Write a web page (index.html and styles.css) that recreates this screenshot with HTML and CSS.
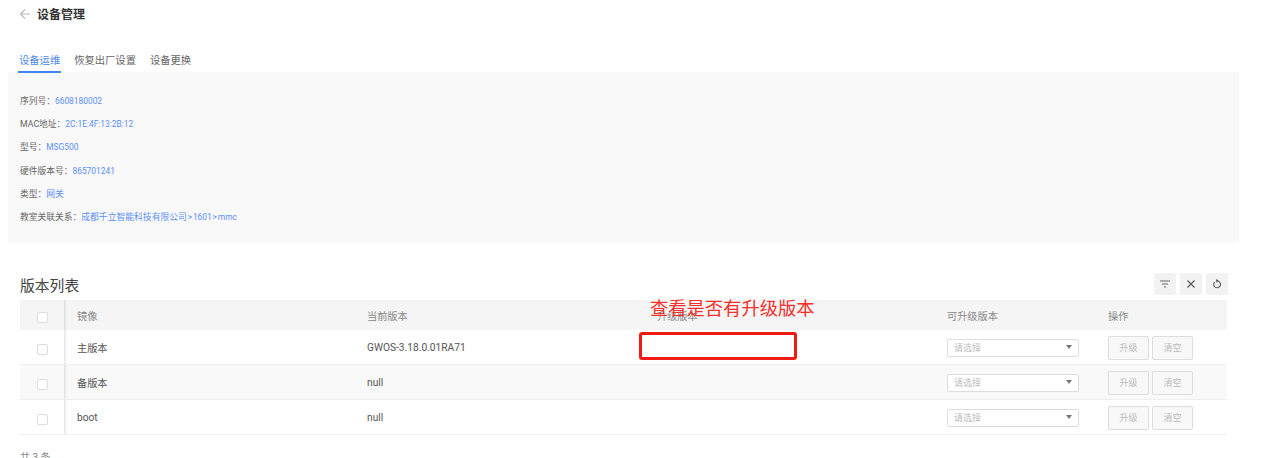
FILE: index.html
```html
<!DOCTYPE html>
<html lang="en">
<head>
    <meta charset="UTF-8">
    <meta name="viewport" content="width=device-width, initial-scale=1.0">
    <title>设备管理</title>
    <link rel="stylesheet" href="styles.css">
</head>
<body>
    <div class="page">
        <div class="title-bar">
            <svg class="back" width="12" height="12" viewBox="0 0 12 12"><path d="M11 6H1.5M6 1.5 1.5 6 6 10.5" fill="none" stroke="#bbb" stroke-width="1.1"/></svg>
            <span class="title">设备管理</span>
        </div>

        <div class="tabs">
            <a class="tab active">设备运维</a>
            <a class="tab">恢复出厂设置</a>
            <a class="tab">设备更换</a>
        </div>

        <div class="info">
            <div class="info-row">序列号：<span class="val">6608180002</span></div>
            <div class="info-row">MAC地址：<span class="val">2C:1E:4F:13:2B:12</span></div>
            <div class="info-row">型号：<span class="val">MSG500</span></div>
            <div class="info-row">硬件版本号：<span class="val">865701241</span></div>
            <div class="info-row">类型：<span class="val zh">网关</span></div>
            <div class="info-row">教室关联关系：<span class="val zh">成都千立智能科技有限公司</span><span class="val">&#8202;&gt;&#8202;1601&#8202;&gt;&#8202;mmc</span></div>
        </div>

        <div class="list-head">
            <h2>版本列表</h2>
            <div class="tools">
                <button class="tool"><svg width="12" height="12" viewBox="0 0 12 12"><path d="M1 3h10M3 6h6M5 9h2" fill="none" stroke="#666" stroke-width="1.2"/></svg></button>
                <button class="tool"><svg width="12" height="12" viewBox="0 0 12 12"><path d="M2.5 2.5l7 7M9.5 2.5l-7 7" fill="none" stroke="#555" stroke-width="1.1"/></svg></button>
                <button class="tool"><svg width="12" height="12" viewBox="0 0 12 12"><path d="M6.4 3A3.4 3.4 0 1 1 3.5 4.2" fill="none" stroke="#555" stroke-width="1.1"/><path d="M5.2 .9v3.6L7.9 2.7z" fill="#555"/></svg></button>
            </div>
        </div>

        <table class="versions">
            <colgroup>
                <col class="c-check"><col class="c-image"><col class="c-current"><col class="c-upgrade"><col class="c-avail"><col>
            </colgroup>
            <thead>
                <tr>
                    <th class="check"><span class="box"></span></th>
                    <th>镜像</th><th>当前版本</th><th>升级版本</th><th>可升级版本</th><th>操作</th>
                </tr>
            </thead>
            <tbody>
                <tr>
                    <td class="check"><span class="box"></span></td>
                    <td>主版本</td><td>GWOS-3.18.0.01RA71</td><td></td>
                    <td><div class="select">请选择<i class="caret"></i></div></td>
                    <td><div class="ops"><button class="btn">升级</button><button class="btn">清空</button></div></td>
                </tr>
                <tr class="alt">
                    <td class="check"><span class="box"></span></td>
                    <td>备版本</td><td>null</td><td></td>
                    <td><div class="select">请选择<i class="caret"></i></div></td>
                    <td><div class="ops"><button class="btn">升级</button><button class="btn">清空</button></div></td>
                </tr>
                <tr>
                    <td class="check"><span class="box"></span></td>
                    <td>boot</td><td>null</td><td></td>
                    <td><div class="select">请选择<i class="caret"></i></div></td>
                    <td><div class="ops"><button class="btn">升级</button><button class="btn">清空</button></div></td>
                </tr>
            </tbody>
        </table>

        <div class="total">共 3 条</div>

        <!-- annotation drawn over the screenshot -->
        <div class="note">查看是否有升级版本</div>
        <div class="note-box"></div>
    </div>
</body>
</html>
```

FILE: styles.css
```css
*, *:before, *:after {
    box-sizing: border-box;
}

html, body {
    margin: 0;
    height: 100%;
    overflow: hidden;
    background: #fff;
}

body {
    font-family: Roboto, "Noto Sans CJK SC", sans-serif;
    color: #555;
}

.page {
    position: relative;
    width: 1261px;
    height: 458px;
    overflow: hidden;
}

.title-bar {
    display: flex;
    align-items: center;
    gap: 6px;
    height: 27px;
    padding-left: 19px;
}

.title {
    font-size: 12px;
    font-weight: 700;
    color: #333;
}

.tabs {
    display: flex;
    gap: 14px;
    height: 45px;
    padding: 25px 0 0 19px;
}

.tab {
    position: relative;
    font-size: 10.3px;
    line-height: 18px;
    color: #666;
}

.tab.active {
    color: #4d8af0;
}

.tab.active:after {
    content: '';
    position: absolute;
    left: -1px;
    right: -1px;
    top: 19px;
    height: 2px;
    background: #3f86f5;
}

.info {
    width: 1231px;
    height: 171px;
    margin-left: 8px;
    padding: 17.5px 12px 0;
    background: #f9f9f9;
}

.info-row {
    height: 23.4px;
    font-size: 8.75px;
    line-height: 23px;
    color: #666;
}

.val {
    font-size: 8.4px;
    color: #5b8ff9;
}

.val.zh {
    font-size: 8.8px;
}

.list-head {
    display: flex;
    align-items: center;
    justify-content: space-between;
    width: 1208px;
    height: 24px;
    margin: 29px 0 0 20px;
}

.list-head h2 {
    margin: 0;
    font-size: 14.8px;
    font-weight: 400;
    color: #444;
}

.tools {
    display: flex;
    gap: 4px;
}

.tool {
    display: flex;
    align-items: center;
    justify-content: center;
    width: 22px;
    height: 22px;
    padding: 0;
    border: 0;
    border-radius: 3px;
    background: #f2f2f2;
}

.versions {
    width: 1207px;
    margin: 4px 0 0 20px;
    border-collapse: separate;
    border-spacing: 0;
    table-layout: fixed;
    font-size: 10.2px;
}

.c-check { width: 44px; }
.c-image { width: 290px; }
.c-current { width: 290px; }
.c-upgrade { width: 303px; }
.c-avail { width: 161px; }

.versions th {
    height: 30px;
    padding: 0 0 0 13px;
    background: #f5f5f5;
    font-weight: 400;
    text-align: left;
    color: #888;
}

.versions td {
    height: 35px;
    padding: 1px 0 0 13px;
    border-bottom: 1px solid #efefef;
    color: #555;
}

.versions .alt td {
    background: #f9f9f9;
}

.versions .check {
    padding: 0;
    text-align: center;
}

/* soft shadow of the fixed checkbox column */
.versions th:nth-child(2), .versions td:nth-child(2) {
    background-image: linear-gradient(90deg, rgba(0, 0, 0, .1), rgba(0, 0, 0, 0) 3px);
}

.versions th:nth-child(5), .versions td:nth-child(5),
.versions th:nth-child(6), .versions td:nth-child(6) {
    padding-left: 0;
}

.box {
    display: block;
    width: 11px;
    height: 11px;
    margin: 4px auto 0;
    border: 1px solid #ddd;
    border-radius: 2px;
    background: #fff;
}

.select {
    position: relative;
    width: 132px;
    height: 18px;
    padding-left: 6px;
    border: 1px solid #ddd;
    border-radius: 2px;
    background: #fff;
    font-size: 9px;
    line-height: 16px;
    color: #bbb;
}

.caret {
    position: absolute;
    top: 5px;
    right: 6px;
    border: 3.5px solid transparent;
    border-top: 4px solid #777;
    border-bottom: 0;
}

.ops {
    display: flex;
    gap: 3px;
}

.btn {
    width: 41px;
    height: 24px;
    padding: 0;
    border: 1px solid #ddd;
    border-radius: 2px;
    background: #f8f8f8;
    font-family: inherit;
    font-size: 9px;
    color: #bbb;
}

.total {
    margin: 14px 0 0 20px;
    font-size: 10px;
    color: #888;
}

.note {
    position: absolute;
    left: 650px;
    top: 296px;
    font-size: 18.3px;
    line-height: 26px;
    color: #f5302a;
}

.note-box {
    position: absolute;
    left: 639px;
    top: 332px;
    width: 158px;
    height: 28px;
    border: 3px solid #f01c14;
    border-radius: 3px;
}
```
